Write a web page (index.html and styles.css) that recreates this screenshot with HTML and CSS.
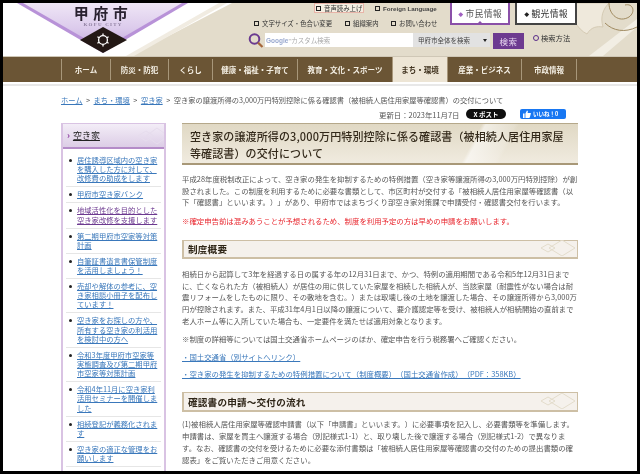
FILE: index.html
```html
<!DOCTYPE html>
<html lang="ja">
<head>
<meta charset="utf-8">
<title>空き家の譲渡所得の3,000万円特別控除に係る確認書</title>
<link rel="stylesheet" href="styles.css">
</head>
<body>
<div class="frame">
  <header class="header">
    <svg class="art" viewBox="0 0 634 53" width="634" height="53" aria-hidden="true">
      <defs>
        <linearGradient id="lav" x1="0" y1="0" x2="0" y2="1">
          <stop offset="0" stop-color="#efe6f6"/>
          <stop offset="0.55" stop-color="#dccbec"/>
          <stop offset="1" stop-color="#c3a6dd"/>
        </linearGradient>
      </defs>
      <rect width="634" height="53" fill="#fff"/>
      <polygon points="229,0 634,0 634,53 127,53" fill="#e3dccb"/>
      <polygon points="216,0 224,0 131,53 123,53" fill="#f1ece2"/>
      <polygon points="634,16 634,24 600,53 586,53" fill="#f2eee4"/>
      <polygon points="14,0 185,0 100,50" fill="#b892d8"/>
      <polygon points="20,0 179,0 100,46" fill="url(#lav)"/>
      <path d="M565 0 C568 14 574 26 584 31 C588 24 594 23 600 24 C597 14 600 6 606 0 Z" fill="#efe9dc" stroke="#cfc4ac" stroke-width="0.8"/>
      <path d="M606 0 C606 12 616 20 626 14 C633 9 630 0 622 2 M634 24 C622 30 610 28 602 20" fill="none" stroke="#a08a60" stroke-width="1"/>
      <polygon points="100,24 124,37 100,50 77,37" fill="#231815"/>
      <g fill="none" stroke="#fff" stroke-width="1.3">
        <circle cx="100" cy="37" r="4.4"/>
        <path d="M100 30.5V32.6M100 41.4V43.5M94.4 33.8L96.2 34.8M103.8 39.2L105.6 40.2M94.4 40.2L96.2 39.2M103.8 34.8L105.6 33.8"/>
      </g>
    </svg>
    <div class="logo">
      <span class="logo-name">甲府市</span>
      <span class="logo-en">KOFU CITY</span>
    </div>
    <div class="tools">
      <div class="tools-top">
        <div class="links">
          <div class="link-row row-a">
            <a class="tool tool-voice"><i class="sq"></i>音声読み上げ</a>
            <a class="tool tool-lang"><i class="sq"></i>Foreign Language</a>
          </div>
          <div class="link-row row-b">
            <a class="tool t-size"><i class="sq"></i>文字サイズ・色合い変更</a>
            <a class="tool t-org"><i class="sq"></i>組織案内</a>
            <a class="tool"><i class="sq"></i>お問い合わせ</a>
          </div>
        </div>
        <a class="tab tab-citizen"><span class="tab-mark">◆</span>市民情報</a>
        <a class="tab tab-tour"><span class="tab-mark">◆</span>観光情報</a>
      </div>
      <div class="search">
        <svg class="glass" viewBox="0 0 16 15" width="16" height="15" aria-hidden="true">
          <circle cx="6.5" cy="6" r="4.8" fill="none" stroke="#6a3a90" stroke-width="2"/>
          <path d="M10 9.6L14.5 14" stroke="#a5663a" stroke-width="2.2"/>
        </svg>
        <div class="search-input"><span class="g-word">Google</span><span class="g-tm">™</span>カスタム検索</div>
        <div class="search-select">甲府市全体を検索<span class="caret"></span></div>
        <button class="search-btn">検索</button>
        <a class="search-help"><i class="ring"></i>検索方法</a>
      </div>
    </div>
  </header>

  <nav class="nav">
    <a class="nav-item w-home">ホーム</a>
    <a class="nav-item w-safe">防災・防犯</a>
    <a class="nav-item w-life">くらし</a>
    <a class="nav-item w-health">健康・福祉・子育て</a>
    <a class="nav-item w-edu">教育・文化・スポーツ</a>
    <a class="nav-item w-town active">まち・環境</a>
    <a class="nav-item w-biz">産業・ビジネス</a>
    <a class="nav-item w-gov">市政情報</a>
  </nav>

  <div class="crumbs">
    <a>ホーム</a><span class="gt">&gt;</span><a>まち・環境</a><span class="gt">&gt;</span><a>空き家</a><span class="gt">&gt;</span><span>空き家の譲渡所得の3,000万円特別控除に係る確認書（被相続人居住用家屋等確認書）の交付について</span>
  </div>
  <div class="meta">
    <span class="updated">更新日：2023年11月7日</span>
    <a class="x-post">X ポスト</a>
    <a class="fb-like">
      <svg viewBox="0 0 10 10" width="8" height="8" aria-hidden="true"><path d="M0 4.5H2V10H0ZM3 4.5L5 0.5C6 0.5 6.3 1.5 6 2.5L5.7 3.8H9.2C10 3.8 10 4.6 9.7 5L8.6 9.2C8.4 9.8 8 10 7.5 10H3Z" fill="#fff"/></svg>
      いいね！0
    </a>
  </div>

  <div class="columns">
    <aside class="side">
      <h2 class="side-title"><span class="chev">›</span><a>空き家</a>
        <svg class="orn" viewBox="0 0 26 18" width="26" height="18" aria-hidden="true"><path d="M0 9L8 4L16 9L8 14ZM8 9L19 1L30 9L19 17Z" fill="none" stroke="#e6dced"/></svg>
      </h2>
      <ul class="side-list">
        <li><a>居住誘導区域内の空き家を購入した方に対して、改修費の助成をします</a></li>
        <li><a>甲府市空き家バンク</a></li>
        <li><a class="visited">地域活性化を目的とした空き家改修を支援します</a></li>
        <li><a>第二期甲府市空家等対策計画</a></li>
        <li><a>自筆証書遺言書保管制度を活用しましょう！</a></li>
        <li><a>売却や解体の参考に、空き家相談小冊子を配布しています！</a></li>
        <li><a>空き家をお探しの方や、所有する空き家の利活用を検討中の方へ</a></li>
        <li><a>令和3年度甲府市空家等実態調査及び第二期甲府市空家等対策計画</a></li>
        <li><a>令和4年11月に空き家利活用セミナーを開催しました</a></li>
        <li><a>相続登記が義務化されます</a></li>
        <li><a>空き家の適正な管理をお願いします</a></li>
      </ul>
    </aside>
    <main class="main">
      <h1 class="title">空き家の譲渡所得の3,000万円特別控除に係る確認書（被相続人居住用家屋<br>等確認書）の交付について</h1>
      <p class="para p1">平成28年度税制改正によって、空き家の発生を抑制するための特例措置（空き家等譲渡所得の3,000万円特別控除）が創<br>設されました。この制度を利用するために必要な書類として、市区町村が交付する「被相続人居住用家屋等確認書（以<br>下「確認書」といいます。）」があり、甲府市ではまちづくり部空き家対策課で申請受付・確認書交付を行います。</p>
      <p class="para red">※確定申告前は混みあうことが予想されるため、制度を利用予定の方は早めの申請をお願いします。</p>
      <h2 class="sec s1">制度概要<svg class="orn" viewBox="0 0 36 16" width="36" height="16" aria-hidden="true"><path d="M0 8L7 4L14 8L7 12ZM8 8L21 0L34 8L21 16Z" fill="none" stroke="#e3dccb"/></svg></h2>
      <p class="para p2">相続日から起算して3年を経過する日の属する年の12月31日まで、かつ、特例の適用期間である令和5年12月31日まで<br>に、亡くなられた方（被相続人）が居住の用に供していた家屋を相続した相続人が、当該家屋（耐震性がない場合は耐<br>震リフォームをしたものに限り、その敷地を含む。）または取壊し後の土地を譲渡した場合、その譲渡所得から3,000万<br>円が控除されます。また、平成31年4月1日以降の譲渡について、要介護認定等を受け、被相続人が相続開始の直前まで<br>老人ホーム等に入所していた場合も、一定要件を満たせば適用対象となります。</p>
      <p class="para p3">※制度の詳細等については国土交通省ホームページのほか、確定申告を行う税務署へご確認ください。</p>
      <p class="para p4"><a class="doc">・国土交通省（別サイトへリンク）</a></p>
      <p class="para p5"><a class="doc">・空き家の発生を抑制するための特例措置について（制度概要）（国土交通省作成）（PDF：358KB）</a></p>
      <h2 class="sec s2">確認書の申請～交付の流れ<svg class="orn" viewBox="0 0 36 16" width="36" height="16" aria-hidden="true"><path d="M0 8L7 4L14 8L7 12ZM8 8L21 0L34 8L21 16Z" fill="none" stroke="#e3dccb"/></svg></h2>
      <p class="para p6">(1)被相続人居住用家屋等確認申請書（以下「申請書」といいます。）に必要事項を記入し、必要書類等を準備します。<br>申請書は、家屋を買主へ譲渡する場合（別記様式1-1）と、取り壊した後で譲渡する場合（別記様式1-2）で異なりま<br>す。なお、確認書の交付を受けるために必要な添付書類は「被相続人居住用家屋等確認書の交付のための提出書類の確<br>認表」をご覧いただきご用意ください。</p>
    </main>
  </div>
</div>
</body>
</html>
```
FILE: styles.css
```css
* { box-sizing: border-box; }
html, body { margin: 0; height: 474px; overflow: hidden; background: #000; }
body { padding: 3px; font-family: "Noto Sans CJK JP", "Liberation Sans", sans-serif; font-size: 7.4px; color: #555; text-spacing-trim: space-all; }
a { color: inherit; }
.frame { width: 634px; height: 468px; overflow: hidden; background: #fff; filter: blur(0.3px); }

/* header */
.header { position: relative; height: 53px; display: flex; }
.art { position: absolute; left: 0; top: 0; }
.logo { position: relative; width: 245px; padding-left: 69px; padding-top: 1px; display: flex; flex-direction: column; }
.logo-name { width: 62px; text-align: center; font-size: 15px; line-height: 17px; letter-spacing: 4.5px; font-weight: 700; color: #2a2230; }
.logo-en { width: 62px; text-align: center; font-size: 5px; line-height: 8px; letter-spacing: 1.2px; font-weight: 700; color: #8f7fa0; font-family: "Liberation Serif", serif; }
.tools { position: relative; width: 330px; display: flex; flex-direction: column; }
.tools-top { display: flex; height: 30px; }
.links { width: 202px; padding-left: 6px; }
.link-row { display: flex; align-items: center; white-space: nowrap; color: #333; font-size: 6.4px; }
.row-a { height: 10px; padding-left: 60px; }
.row-b { height: 10px; margin-top: 5px; }
.t-size { width: 91px; }
.t-org { width: 46px; }
.tool { display: flex; align-items: center; }
.sq { width: 5px; height: 5px; border: 1.5px solid #222; margin-right: 3px; flex: none; }
.tool-voice { width: 50px; height: 10px; margin-right: 11px; padding: 0 0 0 1px; border: 1px solid #e8b4a8; background: #f5eee2; }
.tool-lang { font-family: "Liberation Sans", sans-serif; font-weight: 700; font-size: 6.2px; color: #444; }
.tab { position: relative; display: flex; align-items: center; justify-content: center; height: 22px; background: #fff; font-size: 8.8px; letter-spacing: 0.3px; color: #333; }
.tab-citizen { width: 60px; border: 2px solid #8a50a8; border-top: 0; color: #555; }
.tab-citizen::after { content: ""; position: absolute; left: 50%; bottom: 0; margin-left: -2px; border: 2px solid transparent; border-bottom-color: #8a50a8; border-top: 0; }
.tab-tour { width: 62px; margin-left: 5px; border: 2px solid #444; border-top: 0; }
.tab-mark { font-size: 5px; margin-right: 2px; color: #222; }
.tab-citizen .tab-mark { color: #a060c0; }
.search { display: flex; align-items: flex-start; height: 16px; }
.glass { flex: none; margin-right: 1px; }
.search-input { width: 148px; height: 14px; background: #fff; font-size: 6.5px; line-height: 14px; padding-left: 1px; color: #aaa; white-space: nowrap; }
.g-word { color: #9aa9cf; font-family: "Liberation Sans", sans-serif; font-weight: 700; }
.g-tm { font-size: 4px; vertical-align: top; }
.search-select { position: relative; width: 77px; height: 14px; background: #e2e2e2; font-size: 6.5px; line-height: 14px; padding-left: 5px; color: #444; white-space: nowrap; }
.caret { position: absolute; right: 3px; top: 6px; border: 2.5px solid transparent; border-top: 3px solid #222; border-bottom: 0; }
.search-btn { width: 31px; height: 16px; margin-left: 3px; padding: 0; border: 0; background: #6d3a90; color: #e8d8f0; font-family: inherit; font-size: 8.5px; line-height: 16px; letter-spacing: 0.5px; }
.search-help { display: flex; align-items: center; margin-left: 9px; height: 10px; color: #333; font-size: 7.3px; }
.ring { width: 6px; height: 6px; border: 1.6px solid #5a2d8a; border-radius: 50%; margin-right: 2px; }

/* nav */
.nav { display: flex; height: 26px; padding-left: 58px; background: #6b5535; border-top: 1px solid #cfc7b6; color: #fff; font-size: 7.5px; font-weight: 700; }
.nav-item { display: flex; align-items: center; justify-content: center; height: 21px; margin-top: 2px; border-right: 1px solid #a8977a; white-space: nowrap; color: #f4efe4; }
.w-home { width: 50px; border-left: 1px solid #a8977a; }
.w-safe { width: 58px; }
.w-life { width: 44px; }
.w-health { width: 85px; }
.w-edu { width: 94px; border-right: 0; }
.w-town { width: 56px; }
.w-biz { width: 74px; }
.w-gov { width: 55px; }
.active { height: 25px; margin-top: 0; background: #ede5d5; color: #3a2c18; border: 1px solid #a8977a; border-width: 0 1px; }

/* crumbs */
.crumbs { margin-top: 2px; padding: 11px 0 0 58px; height: 21px; line-height: 10px; box-shadow: inset 0 2px 0 #e8e8e8; white-space: nowrap; color: #555; font-size: 7.25px; }
.crumbs a { color: #3a78bb; text-decoration: underline; }
.gt { margin: 0 3.5px; }
.meta { display: flex; align-items: center; height: 10px; margin-top: 4px; padding-left: 376px; white-space: nowrap; }
.updated { width: 87px; color: #555; }
.x-post { width: 40px; height: 10px; border-radius: 5px; background: #0f0f0f; color: #fff; text-align: center; font-size: 6.5px; line-height: 10px; font-weight: 700; }
.fb-like { display: flex; align-items: center; gap: 2px; width: 46px; height: 10px; margin-left: 14px; padding-left: 3px; border-radius: 2px; background: #1877f2; color: #fff; font-size: 5.5px; font-weight: 700; }

/* columns */
.columns { display: flex; margin-top: 4px; padding-left: 58px; gap: 16px; align-items: flex-start; }
.side { width: 105px; border: 1px solid #d9c3e3; border-width: 1px 2px; flex: none; height: 400px; }
.side-title { position: relative; display: flex; align-items: center; height: 25px; margin: 0; padding-left: 4px; border-bottom: 2px solid #b48cc8; background: linear-gradient(#f3edf7, #dccde6); font-size: 9px; font-weight: 400; color: #222; overflow: hidden; }
.side-title a { text-decoration: underline; }
.chev { color: #8c3ca0; font-weight: 700; margin-right: 3px; }
.orn { position: absolute; right: 0; top: 50%; margin-top: -9px; }
.side-list { list-style: none; margin: 0; padding: 4px 3px 0; }
.side-list li { position: relative; padding: 3px 2px 2.8px 11px; border-bottom: 1px solid #e6e6e6; font-size: 7.3px; line-height: 9.2px; }
.side-list li::before { content: ""; position: absolute; left: 3px; top: 6px; width: 3px; height: 3px; border-radius: 50%; background: #222; }
.side-list a { color: #3a78bb; text-decoration: underline; }
.side-list a.visited { color: #6d3a90; }

/* main */
.main { width: 396px; flex: none; }
.title { margin: 0; height: 42px; padding: 4px 0 0 8px; font-size: 11px; line-height: 17px; font-weight: 500; color: #33291a; border-top: 1px solid #b5a88a; border-bottom: 2px solid #a89878; background: linear-gradient(118deg, transparent 72%, rgba(255,255,255,.55) 73%, rgba(255,255,255,.15) 80%, transparent 81%), linear-gradient(#e0d8c4, #f0ebdf); letter-spacing: 0.12px; white-space: nowrap; }
.para { margin: 0; font-size: 7.4px; line-height: 11.7px; white-space: nowrap; }
.p1 { margin-top: 8px; }
.red { margin-top: 6.5px; color: #e8222a; }
.sec { position: relative; display: flex; align-items: center; height: 19px; margin: 0; padding-left: 4px; background: #f5f1ec; border: 1px solid #cdbfa5; border-width: 1px 1px 2px 2px; font-size: 9.6px; font-weight: 700; color: #2f2618; letter-spacing: 0.2px; }
.s1 { margin-top: 14px; }
.p2 { margin-top: 8.5px; }
.p3 { margin-top: 6.5px; }
.p4 { margin-top: 6px; }
.p5 { margin-top: 5.5px; }
.s2 { margin-top: 13px; height: 20px; }
.p6 { margin-top: 6px; }
.doc { color: #3a78bb; text-decoration: underline; }
```
